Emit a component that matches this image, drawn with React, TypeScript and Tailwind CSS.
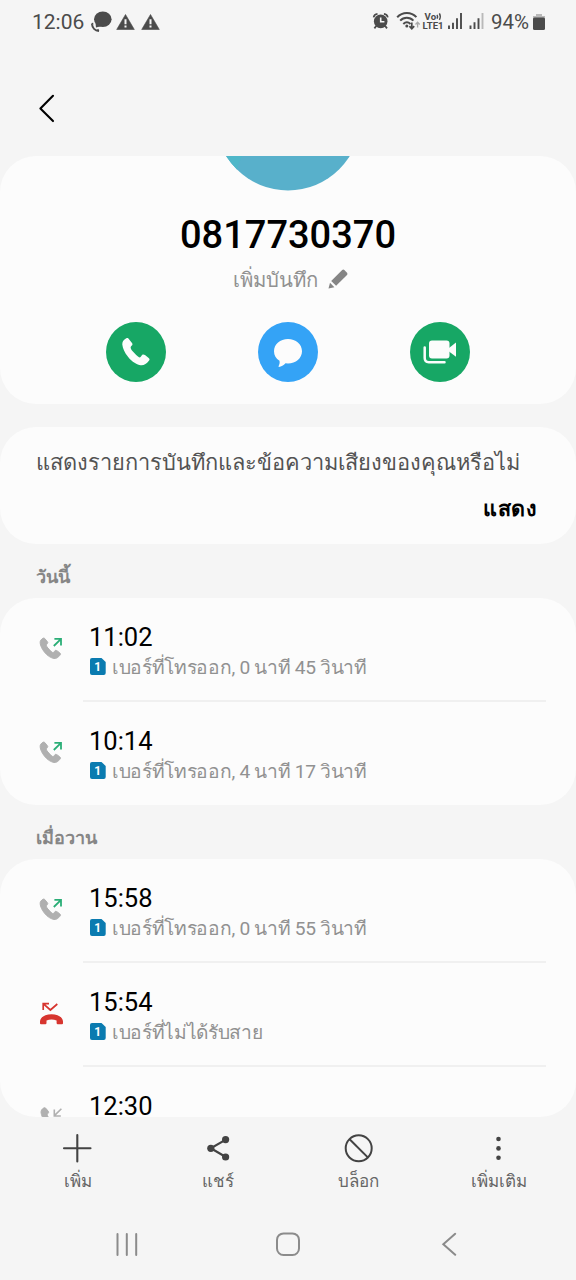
import React from "react";

const HANDSET =
  "M13 1C16 -1 19 1 21 4L30 15C33 19 31 21 28 24C24 28 26 33 32 40C40 49 46 54 51 58C55 60 58 53 61 50C64 48 67 50 70 52L80 60C84 64 83 66 80 69C74 77 66 83 56 82C46 80 30 72 18 56C8 44 2 30 1 20C0 11 6 4 13 1Z";

type CallKind = "out" | "missed" | "in";

function Warning() {
  return (
    <svg className="h-4 w-[19px]" viewBox="0 0 19 16">
      <path d="M9.5 0.5L18.3 15.5H0.7Z" fill="#4b4b4b" stroke="#4b4b4b" strokeWidth="0.6" strokeLinejoin="round" />
      <path d="M9.5 5.2V10.2M9.5 11.6V13.6" stroke="#f5f5f5" strokeWidth="2" />
    </svg>
  );
}

function StatusBar() {
  return (
    <header className="flex h-11 shrink-0 items-center justify-between pl-8 pr-[31px] text-[#4b4b4b]">
      <div className="flex items-center">
        <span className="w-[59px] text-[21px] leading-none">12:06</span>
        <svg className="h-[22px] w-[21px]" viewBox="0 0 21 22">
          <ellipse cx="11.8" cy="8.2" rx="8.8" ry="7.8" fill="#4b4b4b" />
          <path d="M4.5 12L5 16.5L11 15Z" fill="#4b4b4b" />
          <path d="M1.6 13.2C1.8 16.4 4 19 7.8 19.6" fill="none" stroke="#f5f5f5" strokeWidth="3" />
          <path d="M1 13C1.2 16.8 4 19.6 8 20M.6 13L2.3 12.8M6.5 19.5L7.8 18.6" fill="none" stroke="#4b4b4b" strokeWidth="2" />
        </svg>
        <div className="ml-1 flex gap-[6px]">
          <Warning />
          <Warning />
        </div>
      </div>
      <div className="flex items-center">
        <svg className="h-[22px] w-[119px]" viewBox="372 11 119 22">
          <g fill="none" stroke="#4b4b4b">
            <circle cx="380.7" cy="21.4" r="6.8" fill="#4b4b4b" stroke="none" />
            <path d="M373.6 17.4C374 15.2 375.6 14 377.5 13.8M387.8 17.4C387.4 15.2 385.8 14 383.9 13.8" strokeWidth="1.7" />
            <path d="M376.2 26L374.4 28.4M385.2 26L387 28.4" strokeWidth="1.8" />
            <path d="M380.7 17.4V21.8H384.4" stroke="#f5f5f5" strokeWidth="1.6" />
            <path d="M397.2 17.2C402.4 11.6 411.4 11.6 416.4 17.2" strokeWidth="2" />
            <path d="M400.2 20.6C403.8 16.8 409.8 16.8 413.4 20.6" strokeWidth="2" />
            <path d="M403.3 24C405.5 21.8 408.3 21.8 410.5 24" strokeWidth="2" />
            <circle cx="406.8" cy="26" r="1.5" fill="#4b4b4b" stroke="none" />
            <path d="M411.8 22.5V28.6M409.4 26.2L411.8 28.8L414.2 26.2" strokeWidth="1.7" />
            <path d="M417.6 27.4V22.6M415.5 24.5L417.6 22.2L419.7 24.5" stroke="#aaa" strokeWidth="1.3" />
            <path d="M437 14.8Q438.2 16.6 437 18.6M439.4 13.4Q441.2 16.6 439.4 19.8" strokeWidth="1.4" />
            <path d="M449 25.6V29M453 22.8V29M457 18.2V29M461 13V29" strokeWidth="1.9" />
            <path d="M470.5 25.6V29M474.5 22.2V29M478.5 18.2V29" strokeWidth="1.9" />
            <path d="M482.5 13V29" stroke="#b9b9b9" strokeWidth="1.9" />
          </g>
          <g fill="#4b4b4b" fontFamily="Roboto, sans-serif" fontWeight="700">
            <text x="424.6" y="20" fontSize="9.6">Vo</text>
            <text x="422.6" y="29.4" fontSize="9.6">LTE1</text>
          </g>
        </svg>
        <span className="w-[42px] text-[20.5px] leading-none">94%</span>
        <svg className="h-[18px] w-3" viewBox="0 0 12 18">
          <path d="M3 1H9V3H12V6H0V3H3Z" fill="#b9b9b9" />
          <rect y="4.5" width="12" height="12.5" rx="1.5" fill="#4b4b4b" />
        </svg>
      </div>
    </header>
  );
}

function CallIcon({ kind }: { kind: CallKind }) {
  if (kind === "missed") {
    return (
      <svg className="h-[26px] w-[26px]" viewBox="0 0 26 26" fill="none" stroke="#d7352f">
        <path d="M5 3.4L11.4 9L18.3 3M4.2 9V2.7H10" strokeWidth="1.7" />
        <path d="M1 20.5C1 16.4 6 13.2 12.5 13.2S24 16.4 24 20.5V22.2Q24 23.2 23 23.2H18.8Q17.6 23.2 17.6 22V19.4C14.5 18.1 10.6 18.1 7.5 19.4V22Q7.5 23.2 6.3 23.2H2Q1 23.2 1 22.2Z" fill="#d7352f" stroke="none" />
      </svg>
    );
  }
  return (
    <svg className="h-[26px] w-[26px]" viewBox="0 0 26 26" fill="none">
      <g transform={kind === "in" ? "translate(1.8 2.6) scale(.25)" : "translate(.9 2) scale(.25)"}>
        <path d={HANDSET} fill="#b0b0b0" stroke="#b0b0b0" strokeWidth="4" />
      </g>
      {kind === "out" ? (
        <path d="M14.8 10L21.8 3.1M15.4 2.9H22V9.5" stroke="#2bae77" strokeWidth="1.8" />
      ) : (
        <path d="M22.4 3.8L15.4 10.6M15.3 4.6V11H21.8" stroke="#b0b0b0" strokeWidth="1.6" />
      )}
    </svg>
  );
}

function CallRow({ kind, time, detail, last }: { kind: CallKind; time: string; detail?: string; last?: boolean }) {
  return (
    <li className="flex h-[104px] shrink-0 pl-[39px] pr-[30px]">
      <div className="w-11 shrink-0 pt-[38px]">
        <CallIcon kind={kind} />
      </div>
      <div className={last ? "flex-1 pl-[6px] pt-6" : "flex-1 border-b-2 border-[#f0f0f0] pl-[6px] pt-6"}>
        <p className="h-[30px] text-[25.5px] leading-[30px] text-black">{time}</p>
        {detail && (
          <div className="flex h-[30px] items-center whitespace-nowrap pl-px">
            <svg className="mr-[6px] h-[18px] w-4 shrink-0" viewBox="0 0 16 18">
              <path d="M2 0H11.5L15.7 4V15Q15.7 17 13.7 17H2Q0 17 0 15V2Q0 0 2 0Z" fill="#0a7bb0" />
              <text x="7.6" y="13" textAnchor="middle" fontSize="12" fontWeight="700" fill="#fff">1</text>
            </svg>
            <span className="pt-px text-[19.2px] leading-[30px] tracking-[-0.32px] text-[#919191]">{detail}</span>
          </div>
        )}
      </div>
    </li>
  );
}

const ACTIONS = [
  { label: "เพิ่ม", icon: <path d="M16.3 3V29.5M3 16.2H29.5" strokeWidth="2.1" strokeLinecap="round" /> },
  {
    label: "แชร์",
    icon: (
      <>
        <path d="M23.8 7.6L8.8 16.3L23.8 25" strokeWidth="2.2" />
        <g fill="#434343" stroke="none">
          <circle cx="23.6" cy="7.6" r="3.6" />
          <circle cx="8.8" cy="16.3" r="3.6" />
          <circle cx="23.6" cy="25" r="3.6" />
        </g>
      </>
    ),
  },
  {
    label: "บล็อก",
    icon: (
      <>
        <circle cx="16.7" cy="16.3" r="13" strokeWidth="2" />
        <path d="M7.6 7.2L25.8 25.4" strokeWidth="2" />
      </>
    ),
  },
  {
    label: "เพิ่มเติม",
    icon: (
      <g fill="#434343" stroke="none">
        <circle cx="15.5" cy="7" r="2.3" />
        <circle cx="15.5" cy="16.4" r="2.3" />
        <circle cx="15.5" cy="25.8" r="2.3" />
      </g>
    ),
  },
];

export default function App() {
  return (
    <div className="flex h-[1280px] w-[576px] flex-col overflow-hidden bg-[#f5f5f5] font-[Roboto,sans-serif]">
      <StatusBar />
      <div className="flex h-28 shrink-0 items-center pl-[38px]">
        <svg className="mt-4 h-[30px] w-[18px]" viewBox="0 0 18 30" fill="none" stroke="#000" strokeWidth="2.1" strokeLinecap="round" strokeLinejoin="round">
          <path d="M15 2.8L2.4 15.5L15 28.1" />
        </svg>
      </div>

      <section className="flex h-[248px] shrink-0 flex-col items-center overflow-hidden rounded-[36px] bg-[#fcfcfc]">
        <svg className="h-[35px] w-[140px] shrink-0" viewBox="0 0 140 35">
          <circle cx="70" cy="-38" r="72.5" fill="#58b0cb" />
          <path d="M8 0A72.5 72.5 0 0 0 19 13.5Q21 6 24 0Z" fill="#4fb7c9" />
        </svg>
        <h1 className="mt-5 h-12 text-[38px] font-medium leading-[48px] text-black">0817730370</h1>
        <div className="mt-[5px] flex h-[30px] items-center gap-[10px] pl-1">
          <span className="pt-px text-[20.3px] leading-[30px] text-[#919191]">เพิ่มบันทึก</span>
          <svg className="h-5 w-5" viewBox="0 0 20 20" fill="#858585">
            <path d="M0.5 19.5L2 13.8L6.4 18.2Z" />
            <path d="M3.2 12L14.2 1Q15.3 0 16.4 1L19 3.8Q20 5 19 6L8.1 16.8Z" />
          </svg>
        </div>
        <div className="mt-[27.5px] flex gap-[92px] pr-px">
          <button className="flex size-[60px] items-center justify-center rounded-full bg-[#17a765]">
            <svg className="size-7" viewBox="0 0 84 84" fill="#fcfcfc"><path d={HANDSET} /></svg>
          </button>
          <button className="flex size-[60px] items-center justify-center rounded-full bg-[#34a3f6]">
            <svg className="mt-[3px] h-7 w-7" viewBox="0 0 28 28" fill="#fcfcfc">
              <path d="M14 0C21.8 0 28 5.2 28 12.2S21.8 24.4 14 24.4L11.5 24.2C9.5 26.2 7.3 27.6 5 28Q4.3 28 4.6 27.2C5.5 25.5 5.9 23.8 5.5 21.8C2 19.6 0 16.2 0 12.2C0 5.2 6.2 0 14 0Z" />
            </svg>
          </button>
          <button className="flex size-[60px] items-center justify-center rounded-full bg-[#17a765]">
            <svg className="h-6 w-[33px]" viewBox="0 0 33 24" fill="#fcfcfc">
              <rect x="6" y="0.6" width="20.5" height="18" rx="3" />
              <path d="M26 8L33 2.5V16.8L26 11.4Z" />
              <path d="M1.7 7.5V18Q1.7 22.2 5.8 22.2H21.5" fill="none" stroke="#fcfcfc" strokeWidth="2.5" strokeLinecap="round" />
            </svg>
          </button>
        </div>
      </section>

      <section className="mt-[23px] flex h-[117px] shrink-0 flex-col rounded-[36px] bg-[#fcfcfc] pl-9 pr-10 pt-[21px]">
        <p className="h-[30px] whitespace-nowrap text-[21.8px] leading-[30px] text-[#535353]">แสดงรายการบันทึกและข้อความเสียงของคุณหรือไม่</p>
        <button className="mt-4 h-[30px] self-end text-[21.5px] font-bold leading-[30px] tracking-[0.4px] text-black">แสดง</button>
      </section>

      <h2 className="flex h-[54px] shrink-0 items-center pl-9 pt-3 text-[18px] font-semibold leading-7 text-[#868686]">วันนี้</h2>
      <ul className="flex h-[207px] shrink-0 flex-col overflow-hidden rounded-[36px] bg-[#fcfcfc]">
        <CallRow kind="out" time="11:02" detail="เบอร์ที่โทรออก, 0 นาที 45 วินาที" />
        <CallRow kind="out" time="10:14" detail="เบอร์ที่โทรออก, 4 นาที 17 วินาที" last />
      </ul>
      <h2 className="flex h-[54px] shrink-0 items-center pl-9 pt-3 text-[18px] font-semibold leading-7 text-[#868686]">เมื่อวาน</h2>
      <ul className="flex h-[258px] shrink-0 flex-col overflow-hidden rounded-[36px] bg-[#fcfcfc]">
        <CallRow kind="out" time="15:58" detail="เบอร์ที่โทรออก, 0 นาที 55 วินาที" />
        <CallRow kind="missed" time="15:54" detail="เบอร์ที่ไม่ได้รับสาย" />
        <CallRow kind="in" time="12:30" last />
      </ul>

      <nav className="grid h-[91px] shrink-0 grid-cols-4 px-[7px] pt-[15px]">
        {ACTIONS.map((action) => (
          <button key={action.label} className="flex flex-col items-center">
            <svg className="size-8" viewBox="0 0 32 32" fill="none" stroke="#434343">{action.icon}</svg>
            <span className="pl-px pt-px text-[17px] leading-8 text-[#666666]">{action.label}</span>
          </button>
        ))}
      </nav>

      <footer className="flex h-[72px] shrink-0 justify-between pl-[113px] pr-[117px] pt-6">
        <svg className="h-6 w-[26px]" viewBox="0 0 26 24" stroke="#8b8b8b" strokeWidth="2" strokeLinecap="round">
          <path d="M4.5 2V23M13.8 2V23M23.2 2V23" />
        </svg>
        <svg className="mr-[5px] h-6 w-6" viewBox="0 0 24 24" fill="none" stroke="#8b8b8b" strokeWidth="2">
          <rect x="1" y="1.4" width="22" height="21.6" rx="6.5" />
        </svg>
        <svg className="h-6 w-[18px]" viewBox="0 0 18 24" fill="none" stroke="#8b8b8b" strokeWidth="2" strokeLinecap="round">
          <path d="M14.2 1.8L2.3 12.3L14.2 22.8" />
        </svg>
      </footer>
    </div>
  );
}
